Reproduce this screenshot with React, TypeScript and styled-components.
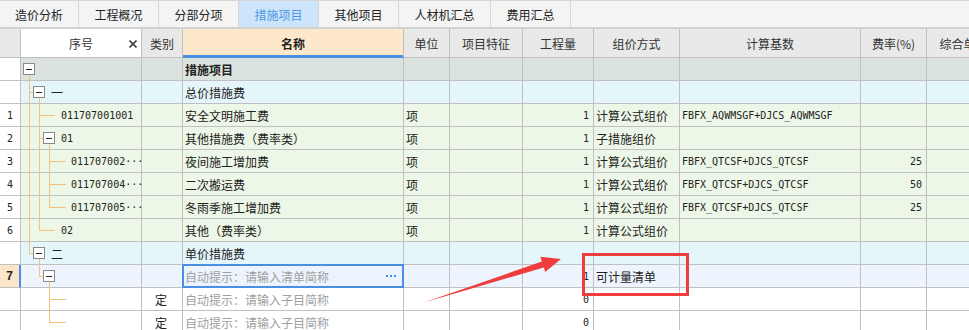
import React from "react";
import styled, { createGlobalStyle, css } from "styled-components";

const GlobalStyle = createGlobalStyle`
  html, body { margin: 0; padding: 0; background: #fff; }
  body {
    font-family: "Noto Sans CJK SC", "Noto Sans", sans-serif;
    font-size: 12px;
    color: #222;
  }
`;

const COLS = "21px 121px 41px 221px 46px 73px 71px 86px 181px 66px 74px";
const GRID = "#c0c0c0";
const ORANGE = "#f6c27a";
const BLUE = "#4a90e2";
const MONO = `"DejaVu Sans Mono", "Liberation Mono", monospace`;

const Screen = styled.div`
  position: relative;
  width: 969px;
  height: 330px;
  overflow: hidden;
  background: #fff;
`;

const TabBar = styled.div`
  display: flex;
  height: 29px;
  box-sizing: border-box;
  border-top: 1px solid #d6d6d6;
  border-bottom: 2px solid #d2d2d2;
  background: #f4f4f4;
`;

const Tab = styled.div<{ $w: number; $active?: boolean }>`
  width: ${(p) => p.$w}px;
  flex: none;
  box-sizing: border-box;
  border-right: 1px solid #d6d6d6;
  display: flex;
  align-items: center;
  justify-content: center;
  font-size: 12px;
  color: ${(p) => (p.$active ? "#4d96e4" : "#222")};
  background: ${(p) => (p.$active ? "#cce5fb" : "#f4f4f4")};
`;

const Grid = styled.div`
  display: flex;
  flex-direction: column;
  width: 1001px;
`;

const Row = styled.div<{ $bg: string; $h: number }>`
  display: grid;
  grid-template-columns: ${COLS};
  height: ${(p) => p.$h}px;
  background: ${(p) => p.$bg};
`;

type Align = "left" | "right" | "center";

const Cell = styled.div<{
  $align?: Align;
  $bg?: string;
  $mono?: boolean;
  $bold?: boolean;
  $muted?: boolean;
}>`
  box-sizing: border-box;
  border-right: 1px solid ${GRID};
  border-bottom: 1px solid ${GRID};
  display: flex;
  align-items: center;
  justify-content: ${(p) =>
    p.$align === "right" ? "flex-end" : p.$align === "center" ? "center" : "flex-start"};
  padding: 0 4px 0 2px;
  white-space: nowrap;
  overflow: hidden;
  min-width: 0;
  ${(p) => p.$bg && css`background: ${p.$bg};`}
  ${(p) => p.$mono && css`font-family: ${MONO}; font-size: 10px;`}
  font-weight: ${(p) => (p.$bold ? 700 : 400)};
  color: ${(p) => (p.$muted ? "#a0a0a0" : "#222")};
`;

const HeadCell = styled(Cell)<{ $accent?: boolean }>`
  justify-content: center;
  padding: 0;
  color: #333;
  background: ${(p) => p.$bg ?? "#e9e9e9"};
  ${(p) =>
    p.$accent &&
    css`
      border-bottom-color: ${BLUE};
      box-shadow: inset 0 -2px 0 ${BLUE};
      color: #222;
    `}
`;

const SortHead = styled(HeadCell)`
  position: relative;
`;

const CloseMark = styled.svg`
  position: absolute;
  right: 4px;
  top: 11px;
`;

const RowNum = styled(Cell)<{ $current?: boolean }>`
  justify-content: center;
  padding: 0;
  background: ${(p) => (p.$current ? "#fde6c8" : "#fff")};
  font-family: ${MONO};
  font-size: 10px;
  ${(p) =>
    p.$current &&
    css`
      border-right: 2px solid ${BLUE};
      font-family: "Liberation Sans", sans-serif;
      font-size: 12px;
      font-weight: 700;
    `}
`;

const TreeCell = styled(Cell)<{ $indent: number }>`
  position: relative;
  overflow: visible;
  padding-left: ${(p) => p.$indent}px;
`;

const TreeSvg = styled.svg`
  position: absolute;
  left: 0;
  top: 0;
  overflow: visible;
`;

const Code = styled.span`
  position: relative;
  font-family: ${MONO};
  font-size: 10px;
  color: #222;
`;

const Ordinal = styled.span`
  position: relative;
  font-size: 12px;
  color: #222;
`;

const EditCell = styled(Cell)`
  position: relative;
  overflow: visible;
  padding-right: 7px;
  &::after {
    content: "";
    position: absolute;
    top: -1px;
    left: -1px;
    right: -1px;
    bottom: -1px;
    border: 2px solid ${BLUE};
    pointer-events: none;
  }
`;

const Dots = styled.span`
  margin-left: auto;
  display: flex;
  gap: 2px;
  & > i {
    width: 2px;
    height: 2px;
    background: #3b8de0;
  }
`;

const Annotation = styled.svg`
  position: absolute;
  left: 0;
  top: 0;
  pointer-events: none;
`;

/* ---------- tree ---------- */

type Seg = [number, number, number, number];
interface Tree {
  segs: Seg[];
  boxes: number[];
  indent: number;
  label?: string;
  code?: boolean;
}

const A = 8.5;
const B = 18.5;
const C = 28.5;
const M = 11.5;

const TreeGraphic: React.FC<{ tree: Tree }> = ({ tree }) => (
  <TreeSvg width={121} height={23} viewBox="0 0 121 23">
    {tree.segs.map(([x1, y1, x2, y2], i) => (
      <line key={i} x1={x1} y1={y1} x2={x2} y2={y2} stroke={ORANGE} strokeWidth={1} />
    ))}
    {tree.boxes.map((bx, i) => (
      <g key={"b" + i}>
        <rect x={bx} y={5.5} width={11} height={11} fill="#fff" stroke="#8a8a8a" strokeWidth={1} />
        <line x1={bx + 2.5} y1={M} x2={bx + 8.5} y2={M} stroke="#222" strokeWidth={1} />
      </g>
    ))}
  </TreeSvg>
);

/* ---------- data ---------- */

type Kind = "group" | "section" | "item" | "selected" | "blank";
const BG: Record<Kind, string> = {
  group: "#dbe3de",
  section: "#e5f6fb",
  item: "#edf7e7",
  selected: "#edf4fe",
  blank: "#ffffff",
};

interface RowData {
  kind: Kind;
  rn?: string;
  tree: Tree;
  type?: string;
  name?: string;
  bold?: boolean;
  placeholder?: boolean;
  editing?: boolean;
  unit?: string;
  qty?: string;
  method?: string;
  base?: string;
  rate?: string;
}

const hLeaf2: Seg = [18, M, 34, M];
const hLeaf3: Seg = [28, M, 45, M];

const ROWS: RowData[] = [
  {
    kind: "group",
    tree: { segs: [[A, 16.5, A, 23]], boxes: [2.5], indent: 40 },
    name: "措施项目",
    bold: true,
  },
  {
    kind: "section",
    tree: {
      segs: [[A, 0, A, 23], [8, M, 12.5, M], [B, 16.5, B, 23]],
      boxes: [12.5],
      indent: 30,
      label: "一",
    },
    name: "总价措施费",
  },
  {
    kind: "item",
    rn: "1",
    tree: { segs: [[A, 0, A, 23], [B, 0, B, 23], hLeaf2], boxes: [], indent: 40, label: "011707001001", code: true },
    name: "安全文明施工费",
    unit: "项",
    qty: "1",
    method: "计算公式组价",
    base: "FBFX_AQWMSGF+DJCS_AQWMSGF",
  },
  {
    kind: "item",
    rn: "2",
    tree: {
      segs: [[A, 0, A, 23], [B, 0, B, 23], [18, M, 22.5, M], [C, 16.5, C, 23]],
      boxes: [22.5],
      indent: 40,
      label: "01",
      code: true,
    },
    name: "其他措施费（费率类）",
    unit: "项",
    qty: "1",
    method: "子措施组价",
  },
  {
    kind: "item",
    rn: "3",
    tree: { segs: [[A, 0, A, 23], [B, 0, B, 23], [C, 0, C, 23], hLeaf3], boxes: [], indent: 50, label: "011707002···", code: true },
    name: "夜间施工增加费",
    unit: "项",
    qty: "1",
    method: "计算公式组价",
    base: "FBFX_QTCSF+DJCS_QTCSF",
    rate: "25",
  },
  {
    kind: "item",
    rn: "4",
    tree: { segs: [[A, 0, A, 23], [B, 0, B, 23], [C, 0, C, 23], hLeaf3], boxes: [], indent: 50, label: "011707004···", code: true },
    name: "二次搬运费",
    unit: "项",
    qty: "1",
    method: "计算公式组价",
    base: "FBFX_QTCSF+DJCS_QTCSF",
    rate: "50",
  },
  {
    kind: "item",
    rn: "5",
    tree: { segs: [[A, 0, A, 23], [B, 0, B, 23], [C, 0, C, M], hLeaf3], boxes: [], indent: 50, label: "011707005···", code: true },
    name: "冬雨季施工增加费",
    unit: "项",
    qty: "1",
    method: "计算公式组价",
    base: "FBFX_QTCSF+DJCS_QTCSF",
    rate: "25",
  },
  {
    kind: "item",
    rn: "6",
    tree: { segs: [[A, 0, A, 23], [B, 0, B, M], hLeaf2], boxes: [], indent: 40, label: "02", code: true },
    name: "其他（费率类）",
    unit: "项",
    qty: "1",
    method: "计算公式组价",
  },
  {
    kind: "section",
    tree: {
      segs: [[A, 0, A, M], [8, M, 12.5, M], [B, 16.5, B, 23]],
      boxes: [12.5],
      indent: 30,
      label: "二",
    },
    name: "单价措施费",
  },
  {
    kind: "selected",
    rn: "7",
    tree: { segs: [[B, 0, B, M], [18, M, 22.5, M], [C, 16.5, C, 23]], boxes: [22.5], indent: 40 },
    name: "自动提示：请输入清单简称",
    placeholder: true,
    editing: true,
    qty: "1",
    method: "可计量清单",
  },
  {
    kind: "blank",
    tree: { segs: [[C, 0, C, 23], hLeaf3], boxes: [], indent: 50 },
    type: "定",
    name: "自动提示：请输入子目简称",
    placeholder: true,
    qty: "0",
  },
  {
    kind: "blank",
    tree: { segs: [[C, 0, C, M], hLeaf3], boxes: [], indent: 50 },
    type: "定",
    name: "自动提示：请输入子目简称",
    placeholder: true,
    qty: "0",
  },
];

const TABS: { label: string; w: number; active?: boolean }[] = [
  { label: "造价分析", w: 79 },
  { label: "工程概况", w: 80 },
  { label: "分部分项", w: 80 },
  { label: "措施项目", w: 80, active: true },
  { label: "其他项目", w: 80 },
  { label: "人材机汇总", w: 92 },
  { label: "费用汇总", w: 80 },
];

const HEAD = ["单位", "项目特征", "工程量", "组价方式", "计算基数", "费率(%)", "综合单价"];

const DataRow: React.FC<{ r: RowData }> = ({ r }) => {
  const bg = BG[r.kind];
  const NameCell = r.editing ? EditCell : Cell;
  return (
    <Row $bg={bg} $h={23}>
      <RowNum $current={r.kind === "selected"}>{r.rn}</RowNum>
      <TreeCell $indent={r.tree.indent}>
        <TreeGraphic tree={r.tree} />
        {r.tree.label &&
          (r.tree.code ? <Code>{r.tree.label}</Code> : <Ordinal>{r.tree.label}</Ordinal>)}
      </TreeCell>
      <Cell $align="center">{r.type}</Cell>
      <NameCell $bold={r.bold} $muted={r.placeholder}>
        {r.name}
        {r.editing && (
          <Dots>
            <i />
            <i />
            <i />
          </Dots>
        )}
      </NameCell>
      <Cell>{r.unit}</Cell>
      <Cell />
      <Cell $align="right" $mono>
        {r.qty}
      </Cell>
      <Cell>{r.method}</Cell>
      <Cell $mono>{r.base}</Cell>
      <Cell $align="right" $mono>
        {r.rate}
      </Cell>
      <Cell />
    </Row>
  );
};

export default function App() {
  return (
    <>
      <GlobalStyle />
      <Screen>
        <TabBar>
          {TABS.map((t) => (
            <Tab key={t.label} $w={t.w} $active={t.active}>
              {t.label}
            </Tab>
          ))}
        </TabBar>
        <Grid>
          <Row $bg="#e9e9e9" $h={29}>
            <HeadCell $bg="#e8e8e8" />
            <SortHead $bg="#ffffff">
              序号
              <CloseMark width={8} height={8} viewBox="0 0 8 8">
                <path d="M0.5 0.5 L7.5 7.5 M7.5 0.5 L0.5 7.5" stroke="#444" strokeWidth={1.6} />
              </CloseMark>
            </SortHead>
            <HeadCell $bg="#e8e8e8">类别</HeadCell>
            <HeadCell $bg="#fee8cc" $accent $bold>
              名称
            </HeadCell>
            {HEAD.map((h) => (
              <HeadCell key={h}>{h}</HeadCell>
            ))}
          </Row>
          {ROWS.map((r, i) => (
            <DataRow key={i} r={r} />
          ))}
        </Grid>
        <Annotation width={969} height={330} viewBox="0 0 969 330">
          <polygon
            points="424,302.5 541.8,261.6 540.4,256.8 561,259 545.2,272 543.8,267.4"
            fill="#ef3d3d"
          />
          <rect x={583.5} y={254.5} width={104} height={40} fill="none" stroke="#ef3d3d" strokeWidth={3} />
        </Annotation>
      </Screen>
    </>
  );
}
